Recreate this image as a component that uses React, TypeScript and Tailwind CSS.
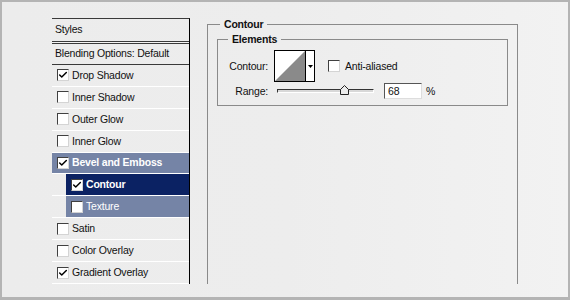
import { Check } from 'lucide-react'

const font = { fontFamily: '"Liberation Sans", Arial, sans-serif' }

type Row = { label: string; checked: boolean; tone?: 'mid' | 'dark'; indent?: boolean; bold?: boolean }

const rows: Row[] = [
  { label: 'Drop Shadow', checked: true },
  { label: 'Inner Shadow', checked: false },
  { label: 'Outer Glow', checked: false },
  { label: 'Inner Glow', checked: false },
  { label: 'Bevel and Emboss', checked: true, tone: 'mid', bold: true },
  { label: 'Contour', checked: true, tone: 'dark', indent: true, bold: true },
  { label: 'Texture', checked: false, tone: 'mid', indent: true },
  { label: 'Satin', checked: false },
  { label: 'Color Overlay', checked: false },
  { label: 'Gradient Overlay', checked: true },
]

function Box({ checked }: { checked: boolean }) {
  return (
    <span className="flex h-[12px] w-[12px] shrink-0 items-center justify-center border border-t-[#404040] border-l-[#404040] border-r-[#d4d4d4] border-b-[#d4d4d4] bg-white">
      {checked && <Check size={10} strokeWidth={3.5} className="text-black" />}
    </span>
  )
}

function StyleRow({ row }: { row: Row }) {
  const bg = row.tone === 'mid' ? 'bg-[#7584a6] text-white' : row.tone === 'dark' ? 'bg-[#0b2263] text-white' : 'text-[#111]'
  return (
    <div className={`flex h-[22px] border-b border-white ${row.indent ? 'pl-[14px]' : ''}`}>
      <div className={`flex flex-1 items-center gap-[3px] pl-[5px] ${bg} ${row.bold ? 'font-bold' : ''}`}>
        <Box checked={row.checked} />
        <span>{row.label}</span>
      </div>
    </div>
  )
}

export default function App() {
  return (
    <div
      className="flex h-[300px] w-[570px] border-2 border-b-[3px] border-[#b4b4b4] bg-gradient-to-r from-[#ececec] via-[#ededed] to-[#f2f2f2] pl-[50px] pt-[16px] text-[10.5px] leading-[13px] tracking-[-0.2px]"
      style={font}
    >
      {/* styles list */}
      <div className="flex h-[266px] w-[138px] flex-col border-t border-r border-t-[#3a3a3a] border-r-black">
        <div className="flex h-[22px] items-center pl-[3px] text-[#111]">Styles</div>
        <div className="h-[3px] border-y border-[#3a3a3a] bg-[#f4f4f4]" />
        <div className="flex h-[21px] items-center border-b border-[#3a3a3a] pl-[3px] text-[#111]">Blending Options: Default</div>
        {rows.map((r) => (
          <StyleRow key={r.label} row={r} />
        ))}
      </div>

      {/* contour panel */}
      <fieldset className="ml-[17px] h-[266px] w-[311px] border border-b-0 border-[#8a8a8a] px-[9px] pt-[2px]">
        <legend className="ml-[3px] px-[4px] font-bold text-[#111]">Contour</legend>
        <fieldset className="border border-[#8a8a8a] pb-[6px] pt-[4px]">
          <legend className="ml-[10px] px-[4px] font-bold text-[#111]">Elements</legend>
          <div className="flex items-center text-[#111]">
            <span className="w-[50px] text-right">Contour:</span>
            <div className="ml-[6px] flex h-[32px] w-[41px] border border-black bg-white">
              <svg width="30" height="30" viewBox="0 0 30 30" className="block">
                <polygon points="0,30 30,0 30,30" fill="#8a8a8a" />
              </svg>
              <div className="flex flex-1 items-center justify-center border-l border-black">
                <svg width="5" height="3" viewBox="0 0 5 3">
                  <polygon points="0,0 5,0 2.5,3" fill="#000" />
                </svg>
              </div>
            </div>
            <span className="ml-[13px] mr-[5px]">
              <Box checked={false} />
            </span>
            <span>Anti-aliased</span>
          </div>
          <div className="mt-[1px] flex items-center text-[#111]">
            <span className="w-[50px] text-right">Range:</span>
            <div className="relative ml-[9px] h-[4px] w-[97px] shrink-0 border border-t-[#333] border-l-[#333] border-b-[#fff] border-r-[#fff] bg-[#d8d8d8]">
              <svg width="9" height="10" viewBox="0 0 9 10" className="absolute left-[62px] top-[-5px]">
                <polygon points="4.5,0.5 8.5,4.5 8.5,9.5 0.5,9.5 0.5,4.5" fill="#ececec" stroke="#222" />
              </svg>
            </div>
            <div className="ml-[10px] flex h-[16px] w-[38px] shrink-0 items-center border border-t-[#555] border-l-[#555] border-b-[#ddd] border-r-[#ddd] bg-white pl-[3px]">
              68
            </div>
            <span className="ml-[4px]">%</span>
          </div>
        </fieldset>
      </fieldset>
    </div>
  )
}
